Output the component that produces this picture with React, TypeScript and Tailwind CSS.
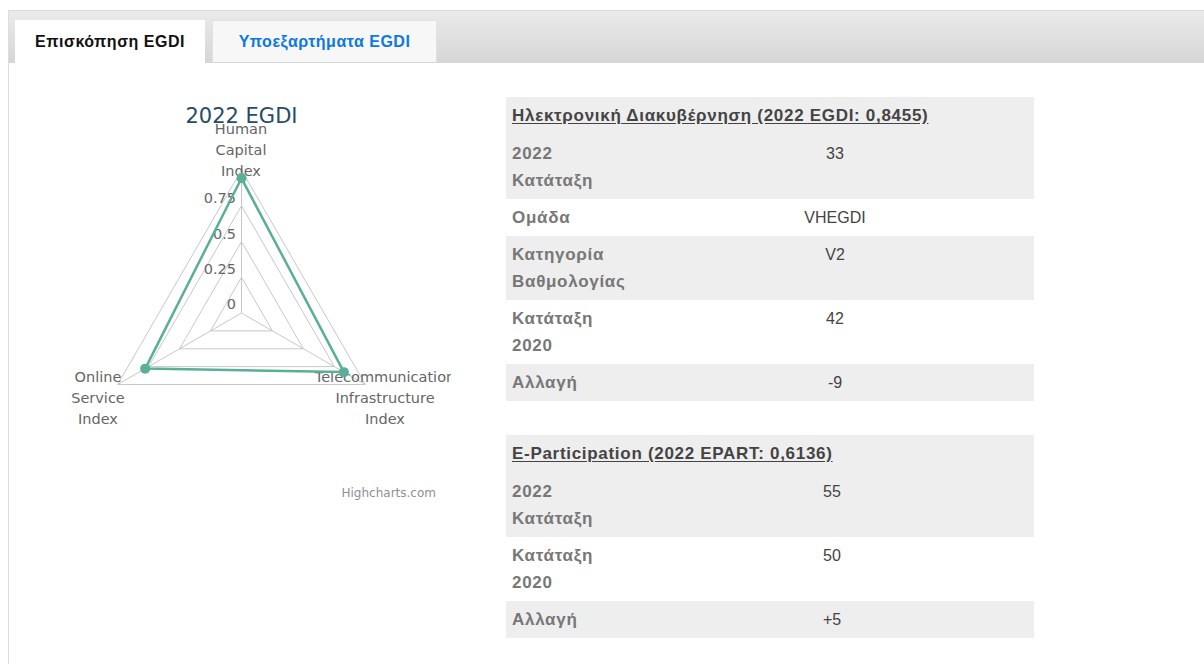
import React from 'react';

type Row = { label: string; value: string };

const egdiRows: Row[] = [
  { label: '2022 Κατάταξη', value: '33' },
  { label: 'Ομάδα', value: 'VHEGDI' },
  { label: 'Κατηγορία Βαθμολογίας', value: 'V2' },
  { label: 'Κατάταξη 2020', value: '42' },
  { label: 'Αλλαγή', value: '-9' },
];

const epartRows: Row[] = [
  { label: '2022 Κατάταξη', value: '55' },
  { label: 'Κατάταξη 2020', value: '50' },
  { label: 'Αλλαγή', value: '+5' },
];

// spider chart geometry (svg coords)
const CX = 210.5;
const CY = 216;
const R = 143;
const ANGLES = [-90, 150, 30];

const pt = (r: number, deg: number) => {
  const a = (deg * Math.PI) / 180;
  return [CX + r * Math.cos(a), CY + r * Math.sin(a)];
};

const poly = (rs: number[]) =>
  rs.map((r, i) => pt(r, ANGLES[i]).map((n) => n.toFixed(1)).join(',')).join(' ');

// Human Capital, Online Service, Telecommunication
const values = [0.942, 0.778, 0.827];

const SpiderChart: React.FC = () => {
  const series = values.map((v, i) => pt(v * R, ANGLES[i]));
  return (
    <svg width={420} height={410} className="block overflow-hidden" style={{ fontFamily: '"DejaVu Sans", sans-serif' }}>
      <text x={CX} y={26} textAnchor="middle" fontSize={21} fill="#274b6d">
        2022 EGDI
      </text>

      {[0.25, 0.5, 0.75, 1].map((s) => (
        <polygon key={s} points={poly([s * R, s * R, s * R])} fill="none" stroke="#c8c8c8" strokeWidth={1} />
      ))}
      {ANGLES.map((deg) => {
        const [x, y] = pt(R, deg);
        return <line key={deg} x1={CX} y1={CY} x2={x} y2={y} stroke="#c8c8c8" strokeWidth={1} />;
      })}

      <g fontSize={14.5} fill="#666" textAnchor="end">
        <text x={205} y={212}>0</text>
        <text x={205} y={177}>0.25</text>
        <text x={205} y={142}>0.5</text>
        <text x={205} y={106}>0.75</text>
      </g>

      <g fontSize={14.5} fill="#666" textAnchor="middle">
        <text x={210} y={37}>Human</text>
        <text x={210} y={58}>Capital</text>
        <text x={210} y={79}>Index</text>
        <text x={67} y={285}>Online</text>
        <text x={67} y={306}>Service</text>
        <text x={67} y={327}>Index</text>
        <text x={354} y={285}>Telecommunication</text>
        <text x={354} y={306}>Infrastructure</text>
        <text x={354} y={327}>Index</text>
      </g>

      <polygon
        points={series.map((p) => p.map((n) => n.toFixed(1)).join(',')).join(' ')}
        fill="none"
        stroke="#5aaf98"
        strokeWidth={2.5}
        strokeLinejoin="round"
      />
      {series.map(([x, y], i) => (
        <circle key={i} cx={x} cy={y} r={5} fill="#5aaf98" />
      ))}

      <text x={405} y={400} textAnchor="end" fontSize={12} fill="#909090">
        Highcharts.com
      </text>
    </svg>
  );
};

const InfoTable: React.FC<{ title: string; rows: Row[]; labelCol: string }> = ({ title, rows, labelCol }) => (
  <div className="w-[528px]">
    <div className="h-[38px] bg-[#eeeeee] px-[6px] flex items-center">
      <span className="text-[17px] tracking-[0.7px] font-bold text-[#444] underline underline-offset-2">{title}</span>
    </div>
    {rows.map((r, i) => (
      <div key={r.label} className={`grid ${labelCol} ${i % 2 === 0 ? 'bg-[#eeeeee]' : 'bg-white'}`}>
        <div className="px-[6px] py-[5px] text-[17px] tracking-[0.7px] leading-[27px] font-bold text-[#777]">{r.label}</div>
        <div className="px-[6px] py-[5px] text-[16px] leading-[27px] text-[#444] text-center">{r.value}</div>
      </div>
    ))}
  </div>
);

export default function App() {
  return (
    <div className="min-h-screen bg-white pt-[10px] pl-[8px]" style={{ fontFamily: '"Liberation Sans", Arial, sans-serif' }}>
      <div className="border-l border-t border-[#dcdcdc] h-[654px]">
        {/* tab strip */}
        <div className="h-[52px] bg-linear-to-b from-[#eaeaea] to-[#d6d6d6] flex items-end pl-[6px] gap-[7px]">
          <div className="w-[190px] h-[43px] bg-white flex items-center justify-center text-[16px] tracking-[0.5px] font-bold text-[#111]">
            Επισκόπηση EGDI
          </div>
          <div className="w-[225px] h-[42px] mb-[1px] bg-[#f7f7f7] border border-b-0 border-[#e2e2e2] flex items-center justify-center text-[16px] tracking-[0.5px] font-bold text-[#0b78e3]">
            Υποεξαρτήματα EGDI
          </div>
        </div>

        {/* overview */}
        <div className="flex pt-[34px]">
          <div className="ml-[22px]">
            <SpiderChart />
          </div>
          <div className="ml-[55px] flex flex-col gap-[34px]">
            <InfoTable title="Ηλεκτρονική Διακυβέρνηση (2022 EGDI: 0,8455)" rows={egdiRows} labelCol="grid-cols-[130px_1fr]" />
            <InfoTable title="E-Participation (2022 EPART: 0,6136)" rows={epartRows} labelCol="grid-cols-[124px_1fr]" />
          </div>
        </div>
      </div>
    </div>
  );
}
